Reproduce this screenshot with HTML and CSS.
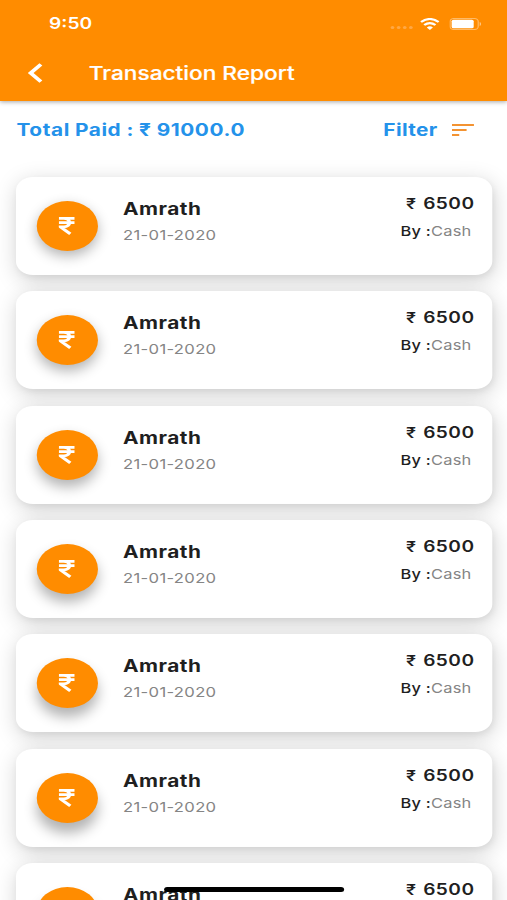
FILE: index.html
```html
<!DOCTYPE html>
<html lang="en">
<head>
<meta charset="utf-8">
<title>Transaction Report</title>
<link rel="stylesheet" href="styles.css">
</head>
<body>
<svg class="defs" width="0" height="0" aria-hidden="true">
  <symbol id="rupee" viewBox="0 0 13 18">
    <path d="M0 1.4H13M0 5.6H13M0 1.4H4C10.3 1.4 10.3 9.8 4 9.8H1.2L9.4 16.9" fill="none" stroke="#fff" stroke-width="2.8"/>
  </symbol>
</svg>
<div class="app">
  <header class="header">
    <div class="status">
      <span class="time">9:50</span>
      <span class="dots"><i></i><i></i><i></i><i></i></span>
      <svg class="wifi" width="16" height="12" viewBox="0 0 16 12">
        <path d="M.8 4Q8-2 15.2 4M3.4 7Q8 3.1 12.6 7" fill="none" stroke="#fff" stroke-width="2.1"/>
        <path d="M5.5 9.4Q8 7.2 10.5 9.4L8 12Z" fill="#fff"/>
      </svg>
      <svg class="battery" width="26" height="12" viewBox="0 0 26 12">
        <rect x=".5" y=".5" width="23" height="11" rx="3" fill="none" stroke="#fff" stroke-opacity=".4"/>
        <rect x="1.8" y="1.7" width="18" height="8.6" rx="1.5" fill="#fff"/>
        <path d="M24.7 4v4q1.2-.7 1.2-2t-1.2-2" fill="#fff" fill-opacity=".5"/>
      </svg>
    </div>
    <div class="bar">
      <svg class="back" width="13" height="20" viewBox="0 0 13 20">
        <path d="M11.4 1.4L3 10l8.4 8.6" fill="none" stroke="#fff" stroke-width="3.3"/>
      </svg>
      <h1 class="title">Transaction Report</h1>
    </div>
  </header>
  <div class="summary">
    <span class="total">Total Paid : ₹ 91000.0</span>
    <span class="filter">Filter</span>
    <svg class="sort" width="18" height="12" viewBox="0 0 18 12">
      <path d="M0 1h18M0 6h12M0 11h6" stroke="#f39332" stroke-width="2"/>
    </svg>
  </div>
  <main class="list">
    <article class="card c1"><div class="coin"><svg width="13" height="18"><use href="#rupee"/></svg></div><div class="who"><b class="name">Amrath</b><span class="date">21-01-2020</span></div><div class="pay"><b class="amount"><span class="sign">₹</span> 6500</b><span class="by"><b>By :</b>Cash</span></div></article>
    <article class="card c2"><div class="coin"><svg width="13" height="18"><use href="#rupee"/></svg></div><div class="who"><b class="name">Amrath</b><span class="date">21-01-2020</span></div><div class="pay"><b class="amount"><span class="sign">₹</span> 6500</b><span class="by"><b>By :</b>Cash</span></div></article>
    <article class="card c3"><div class="coin"><svg width="13" height="18"><use href="#rupee"/></svg></div><div class="who"><b class="name">Amrath</b><span class="date">21-01-2020</span></div><div class="pay"><b class="amount"><span class="sign">₹</span> 6500</b><span class="by"><b>By :</b>Cash</span></div></article>
    <article class="card c4"><div class="coin"><svg width="13" height="18"><use href="#rupee"/></svg></div><div class="who"><b class="name">Amrath</b><span class="date">21-01-2020</span></div><div class="pay"><b class="amount"><span class="sign">₹</span> 6500</b><span class="by"><b>By :</b>Cash</span></div></article>
    <article class="card c5"><div class="coin"><svg width="13" height="18"><use href="#rupee"/></svg></div><div class="who"><b class="name">Amrath</b><span class="date">21-01-2020</span></div><div class="pay"><b class="amount"><span class="sign">₹</span> 6500</b><span class="by"><b>By :</b>Cash</span></div></article>
    <article class="card c6"><div class="coin"><svg width="13" height="18"><use href="#rupee"/></svg></div><div class="who"><b class="name">Amrath</b><span class="date">21-01-2020</span></div><div class="pay"><b class="amount"><span class="sign">₹</span> 6500</b><span class="by"><b>By :</b>Cash</span></div></article>
    <article class="card c7"><div class="coin"><svg width="13" height="18"><use href="#rupee"/></svg></div><div class="who"><b class="name">Amrath</b></div><div class="pay"><b class="amount"><span class="sign">₹</span> 6500</b></div></article>
  </main>
  <div class="home"></div>
</div>
</body>
</html>
```

FILE: styles.css
```css
* { box-sizing: border-box; }
html, body { margin: 0; overflow: hidden; width: 507px; height: 900px; background: #fff; }
.defs { position: absolute; }

/* 414pt layout stretched to the window width */
.app {
  position: relative;
  width: 414px;
  height: 900px;
  overflow: hidden;
  display: flex;
  flex-direction: column;
  transform: scaleX(1.22464);
  transform-origin: 0 0;
  font-family: Inter, "Liberation Sans", sans-serif;
  color: #1f1f1f;
  white-space: nowrap;
}

.header {
  flex: none;
  height: 101px;
  background: #ff8c00;
  color: #fff;
  box-shadow: 0 1px 4px rgba(0, 0, 0, .35);
}
.status { display: flex; align-items: center; height: 47px; padding: 0 21.5px 0 40px; }
.time { flex: 1; font-size: 15.7px; font-weight: 600; line-height: 20px; }
.dots { display: flex; gap: 1.9px; margin: 8px 6px 0 0; }
.dots i { width: 3px; height: 3px; border-radius: 50%; background: #ffa845; }
.wifi { margin-right: 7.4px; width: 16px; }
.bar { display: flex; align-items: center; height: 52px; padding-left: 22px; }
.title { margin: 0 0 0 37.5px; font-size: 18.5px; font-weight: 500; line-height: 24px; -webkit-text-stroke: .2px #fff; }

.summary {
  flex: none;
  display: flex;
  align-items: center;
  height: 57px;
  padding: 1px 27px 0 13.5px;
  color: #2492ea;
  font-size: 17px;
  font-weight: 700;
  letter-spacing: .4px;
}
.total { flex: 1; letter-spacing: .46px; word-spacing: -.3px; }
.filter { margin-right: 11.6px; letter-spacing: .3px; }

.list { display: flex; flex-direction: column; gap: 16.4px; padding: 18.8px 12.5px 0; }
.card {
  flex: none;
  display: flex;
  align-items: flex-start;
  height: 98px;
  padding: 0 14px 0 17px;
  border-radius: 14px;
  background: #fff;
  box-shadow: 1px 5px 20px rgba(0, 0, 0, .18), 1px 3px 6px rgba(0, 0, 0, .05);
}
.coin {
  --drop: 5px;
  display: flex;
  align-items: center;
  justify-content: center;
  width: 50px;
  height: 50px;
  margin-top: 24px;
  border-radius: 50%;
  background: #ff8c00;
  box-shadow: 0 var(--drop) 12px rgba(0, 0, 0, .3);
}
.c2 .coin { --drop: 6px; }
.c3 .coin { --drop: 7px; }
.c4 .coin { --drop: 8px; }
.c5 .coin { --drop: 9px; }
.c6 .coin { --drop: 10px; }
.c7 .coin { --drop: 11px; }
.who { flex: 1; display: flex; flex-direction: column; padding: 20px 0 0 21px; }
.name { font-size: 17px; font-weight: 700; line-height: 24px; letter-spacing: .4px; }
.date { font-size: 13.6px; line-height: 20px; margin-top: 4px; color: #858585; letter-spacing: .25px; }
.pay { display: flex; flex-direction: column; align-items: flex-end; padding-top: 17px; }
.amount { font-size: 15.6px; font-weight: 600; line-height: 20px; letter-spacing: .4px; }
.amount .sign { font-size: 14.5px; margin-right: 1.2px; }
.by { margin: 7px 2.5px 0 0; font-size: 13.4px; line-height: 20px; color: #858585; letter-spacing: .2px; }
.by b { font-weight: 500; color: #1f1f1f; }

.home {
  position: absolute;
  left: 133.5px;
  top: 887px;
  width: 147.5px;
  height: 5px;
  border-radius: 3px;
  background: #000;
}
```
